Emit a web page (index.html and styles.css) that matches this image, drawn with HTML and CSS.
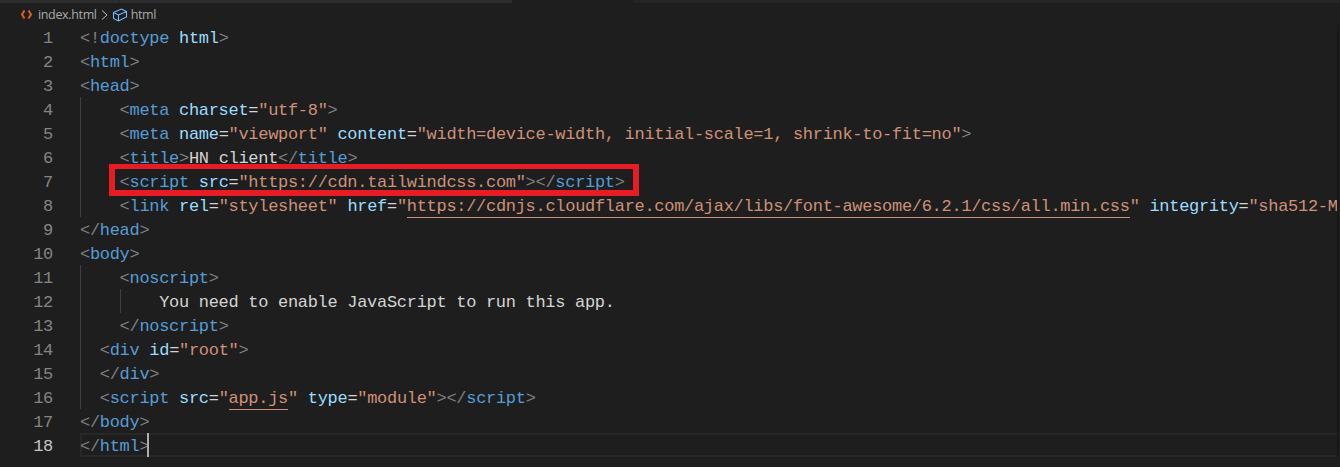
FILE: index.html
```html
<!doctype html>
<html>
<head>
<meta charset="utf-8">
<title>index.html</title>
<link rel="stylesheet" href="styles.css">
</head>
<body>
<div class="topstrip">
  <span class="tab tab-a"></span>
  <span class="tab tab-b"></span>
  <span class="tab tab-active"></span>
  <span class="tab tab-rest"></span>
</div>
<div class="crumbs">
  <svg class="ico-file" viewBox="0 0 16 16" width="16" height="16"><path d="M5.500 3.500 3 7.500l2.500 4M9.500 3.500 12 7.500l-2.500 4" fill="none" stroke="#dd5f22" stroke-width="2"/></svg>
  <span class="crumb">index.html</span>
  <svg class="ico-sep" viewBox="0 0 10 16" width="10" height="16"><path d="M2 3.500 7 8l-5 4.500" fill="none" stroke="#bbbbbb" stroke-width="1"/></svg>
  <svg class="ico-box" viewBox="0 0 16 16" width="16" height="16"><path d="M1.500 5.500 9.500 2 14.500 4.500V10L6.500 14 1.500 11.500ZM1.500 5.500 6.500 8 14.500 4.500M6.500 8V14" fill="none" stroke="#75beff" stroke-width="1.100"/></svg>
  <span class="crumb">html</span>
</div>
<div class="editor">
  <div class="gutter">
    <span>1</span><span>2</span><span>3</span><span>4</span><span>5</span><span>6</span><span>7</span><span>8</span><span>9</span><span>10</span><span>11</span><span>12</span><span>13</span><span>14</span><span>15</span><span>16</span><span>17</span><span class="now">18</span>
  </div>
  <div class="code">
    <div class="ln"><i>&lt;!</i><b>doctype</b> <a>html</a><i>&gt;</i></div>
    <div class="ln"><i>&lt;</i><b>html</b><i>&gt;</i></div>
    <div class="ln"><i>&lt;</i><b>head</b><i>&gt;</i></div>
    <div class="ln in4"><i>&lt;</i><b>meta</b> <a>charset</a>=<s>"utf-8"</s><i>&gt;</i></div>
    <div class="ln in4"><i>&lt;</i><b>meta</b> <a>name</a>=<s>"viewport"</s> <a>content</a>=<s>"width=device-width, initial-scale=1, shrink-to-fit=no"</s><i>&gt;</i></div>
    <div class="ln in4"><i>&lt;</i><b>title</b><i>&gt;</i>HN client<i>&lt;/</i><b>title</b><i>&gt;</i></div>
    <div class="ln in4"><i>&lt;</i><b>script</b> <a>src</a>=<s>"https://cdn.tailwindcss.com"</s><i>&gt;&lt;/</i><b>script</b><i>&gt;</i></div>
    <div class="ln in4"><i>&lt;</i><b>link</b> <a>rel</a>=<s>"stylesheet"</s> <a>href</a>=<s>"<u>https://cdnjs.cloudflare.com/ajax/libs/font-awesome/6.2.1/css/all.min.css</u>"</s> <a>integrity</a>=<s>"sha512-M</s></div>
    <div class="ln"><i>&lt;/</i><b>head</b><i>&gt;</i></div>
    <div class="ln"><i>&lt;</i><b>body</b><i>&gt;</i></div>
    <div class="ln in4"><i>&lt;</i><b>noscript</b><i>&gt;</i></div>
    <div class="ln in8">You need to enable JavaScript to run this app.</div>
    <div class="ln in4"><i>&lt;/</i><b>noscript</b><i>&gt;</i></div>
    <div class="ln in2"><i>&lt;</i><b>div</b> <a>id</a>=<s>"root"</s><i>&gt;</i></div>
    <div class="ln in2"><i>&lt;/</i><b>div</b><i>&gt;</i></div>
    <div class="ln in2"><i>&lt;</i><b>script</b> <a>src</a>=<s>"<u>app.js</u>"</s> <a>type</a>=<s>"module"</s><i>&gt;&lt;/</i><b>script</b><i>&gt;</i></div>
    <div class="ln"><i>&lt;/</i><b>body</b><i>&gt;</i></div>
    <div class="ln cur"><i>&lt;/</i><b>html</b><i>&gt;</i><span class="caret"></span></div>
    <span class="guide g-head"></span>
    <span class="guide g-body"></span>
    <span class="guide g-nos"></span>
    <span class="mark"></span>
    <span class="edge"></span>
  </div>
</div>
</body>
</html>
```

FILE: styles.css
```css
html, body { margin: 0; height: 100%; }
body { background: #1e1e1e; overflow: hidden; font-family: "Liberation Mono", monospace; }
.topstrip { height: 3px; display: flex; background: #252526; }
.tab { display: block; height: 3px; }
.tab-a { width: 119px; background: #2d2d2d; border-right: 1px solid #252526; }
.tab-b { width: 392px; background: #2d2d2d; }
.tab-active { width: 121px; background: #1e1e1e; }
.tab-rest { flex: 1; background: #252526; }
.crumbs { height: 22px; box-sizing: border-box; padding-top: 1px; display: flex; align-items: center; padding-left: 19px; color: #a9a9a9; font: 12.5px/22px "Open Sans", "Liberation Sans", sans-serif; }
.crumb { letter-spacing: -0.35px; }
.ico-file { margin-right: 3px; }
.ico-sep { margin: 0 2px 0 3px; }
.ico-box { margin-right: 3px; }
.editor { display: flex; font-size: 17px; letter-spacing: -0.3px; line-height: 28px; }
.gutter { width: 80px; flex: none; display: flex; flex-direction: column; color: #858585; text-align: right; box-sizing: border-box; padding-right: 27px; }
.gutter span { height: 24px; }
.gutter .now { color: #c6c6c6; }
.code { position: relative; flex: 1; color: #d4d4d4; }
.ln { height: 24px; white-space: pre; }
.in2 { padding-left: 19.8px; }
.in4 { padding-left: 39.6px; }
.in8 { padding-left: 79.2px; }
.ln i { font-style: normal; color: #808080; }
.ln b { font-weight: normal; color: #569cd6; }
.ln a { color: #9cdcfe; }
.ln s { text-decoration: none; color: #ce9178; }
.ln u { text-decoration: none; border-bottom: 1px solid #ce9178; padding-bottom: 1px; }
.cur { box-shadow: inset 0 0 0 2px #282828; }
.caret { display: inline-block; width: 2px; height: 24px; margin-left: -2px; background: #aeafad; vertical-align: top; }
.guide { position: absolute; left: 0; width: 1px; background: #404040; }
.g-head { top: 72px; height: 120px; }
.g-body { top: 240px; height: 144px; }
.g-nos { left: 40px; top: 264px; height: 24px; }
.mark { position: absolute; left: 29px; top: 139px; width: 530px; height: 32px; box-sizing: border-box; border-style: solid; border-color: #e81c24; border-width: 5px 6px 6px; }
.edge { position: absolute; right: 0; top: 0; bottom: 0; width: 3px; background: linear-gradient(to right, #141414, #1e1e1e); }
```
